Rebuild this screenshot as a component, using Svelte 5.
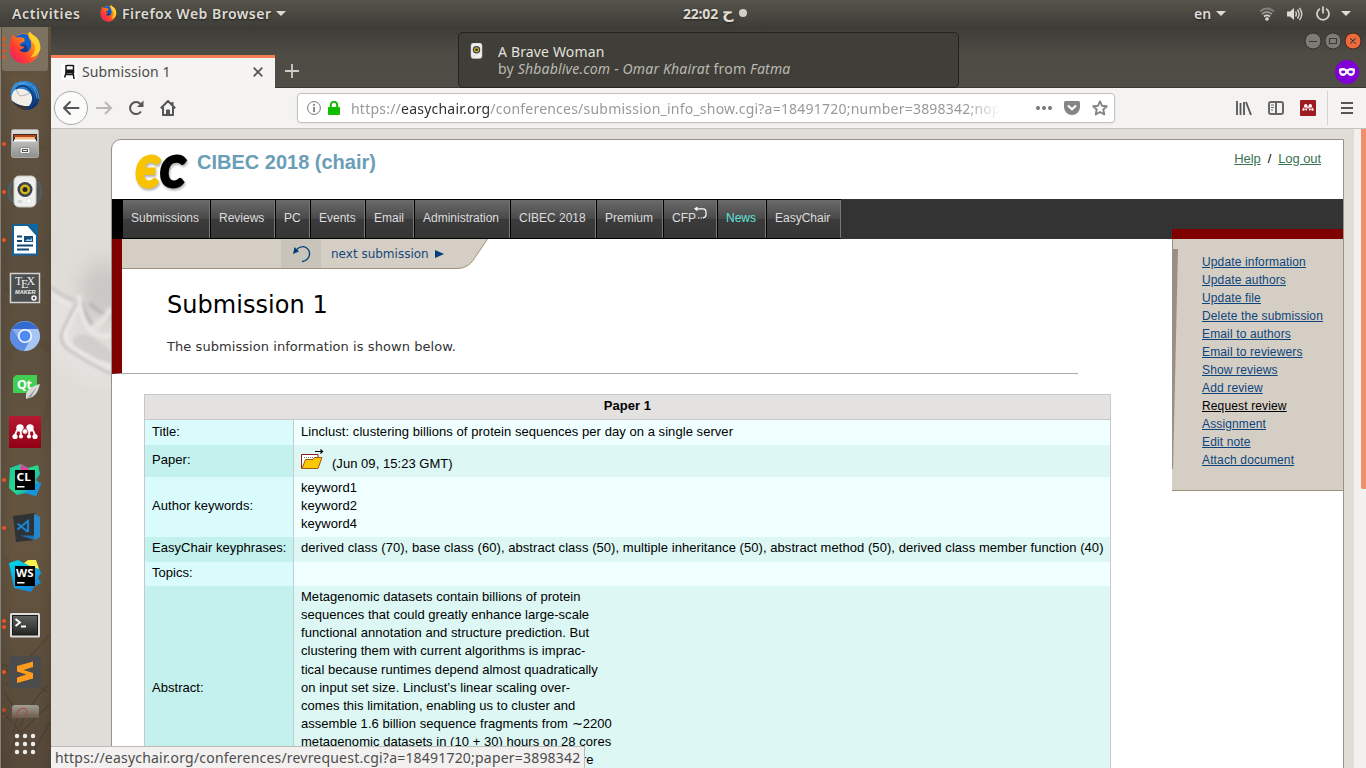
<script>
  const menu = [
    { label: 'Submissions', w: 88 },
    { label: 'Reviews', w: 65 },
    { label: 'PC', w: 35 },
    { label: 'Events', w: 55 },
    { label: 'Email', w: 49 },
    { label: 'Administration', w: 96 },
    { label: 'CIBEC 2018', w: 86 },
    { label: 'Premium', w: 67 },
    { label: 'CFP', w: 54, back: true },
    { label: 'News', w: 49, hot: true },
    { label: 'EasyChair', w: 75 }
  ];
  const actions = [
    'Update information', 'Update authors', 'Update file', 'Delete the submission',
    'Email to authors', 'Email to reviewers', 'Show reviews', 'Add review',
    'Request review', 'Assignment', 'Edit note', 'Attach document'
  ];
  const abstract = [
    'Metagenomic datasets contain billions of protein',
    'sequences that could greatly enhance large-scale',
    'functional annotation and structure prediction. But',
    'clustering them with current algorithms is imprac-',
    'tical because runtimes depend almost quadratically',
    'on input set size. Linclust’s linear scaling over-',
    'comes this limitation, enabling us to cluster and',
    'assemble 1.6 billion sequence fragments from ∼2200',
    'metagenomic datasets in (10 + 30) hours on 28 cores'
  ];
</script>

{#snippet firefox()}
  <circle cx="24" cy="25" r="15" fill="url(#fxo)" />
  <path d="M14 14 Q20 9 27 11 L33 18 Q35 28 27 31 Q20 33 17 27 Z" fill="#0b5fd0" />
  <path d="M20 22 Q28 18 27 29 Q22 33 17 28 Z" fill="#123a91" />
  <path d="M11 15 Q11 12 12 11 Q14 14 17 14 Q20 13 24 15 L24 18 Q21 19 19 21 Q20 23 24 23 Q23 26 19 26 Q21 30 28 28 Q32 24 30 17 Q27 14 28 10 Q29 9 29 8 Q32 11 36 14 Q40 19 39 27 Q36 39 25 40 Q14 40 10 30 Q8 21 11 15Z" fill="url(#fxf)" />
  <path d="M28 8 Q29 16 34 21 Q36 28 30 34 Q38 33 40 25 Q40 18 36 14 Q31 11 28 8Z" fill="#ffd92e" opacity=".85" />
{/snippet}

{#snippet speaker()}
  <path d="M12 14 Q6 24 12 34 M38 14 Q44 24 38 34" stroke="#48617a" stroke-width="3" fill="none" opacity=".7" />
  <rect x="14" y="8" width="22" height="31" rx="5" fill="#eeeeec" stroke="#c5c5c0" />
  <circle cx="25" cy="21.500" r="7.500" fill="#3a4250" />
  <circle cx="25" cy="21.500" r="5" fill="#d4b814" />
  <circle cx="25" cy="21.500" r="2.500" fill="#22252b" />
  <circle cx="29" cy="33" r="2.500" fill="#fff" stroke="#ccc" stroke-width=".5" />
  <path d="M18 32h4v3h-4z" fill="#d6d6d2" />
{/snippet}

{#snippet people()}
  <path d="M15 28.500Q15.500 23 19.500 20M20.800 28.500V22M20 20L25 24L30 20M29.200 28.500V22M35 28.500Q34.500 23 30.500 20" stroke="#fff" stroke-width="1.900" fill="none" />
  <circle cx="20" cy="20" r="3.700" fill="#fff" /><circle cx="30" cy="20" r="3.700" fill="#fff" />
  <circle cx="25" cy="23.500" r="2.700" fill="#fff" stroke="#a80d2a" stroke-width=".7" />
  <circle cx="15" cy="28.500" r="2.600" fill="#fff" /><circle cx="21" cy="28.500" r="2.100" fill="#fff" />
  <circle cx="29" cy="28.500" r="2.100" fill="#fff" /><circle cx="35" cy="28.500" r="2.600" fill="#fff" />
{/snippet}

<div class="desktop">
  <header class="topbar">
    <span class="activities">Activities</span>
    <svg class="fx-small" viewBox="8 8 33 33">{@render firefox()}</svg>
    <span class="app-name">Firefox Web Browser</span>
    <i class="caret"></i>
    <div class="clock"><span>22:02</span><span class="ar">ح</span><i></i></div>
    <div class="status">
      <span class="lang">en</span><i class="caret"></i>
      <svg class="wifi" width="16" height="16" viewBox="0 0 16 16" fill="none" stroke="#d5d4cf" stroke-width="1.700">
        <path d="M1 5.500 Q8 -.5 15 5.500" opacity=".4" /><path d="M3 8 Q8 4 13 8" opacity=".55" /><path d="M5 10.500 Q8 8.300 11 10.500" />
        <circle cx="8" cy="13" r="1.800" fill="#dfdbd2" stroke="none" />
      </svg>
      <svg class="vol" width="17" height="16" viewBox="0 0 17 16">
        <path d="M1 5.500h3L8 2v12L4 10.500H1z" fill="#dfdbd2" />
        <path d="M9.500 5.500q1.800 2.500 0 5M11.500 3.500q3.200 4.500 0 9M13.500 1.800q4.500 6.200 0 12.400" fill="none" stroke="#d5d1c9" stroke-width="1.400" />
      </svg>
      <svg class="power" width="16" height="16" viewBox="0 0 16 16" fill="none" stroke="#d5d1c9" stroke-width="1.800">
        <path d="M5 2.700A6 6 0 1 0 11 2.700M8 .5v7" />
      </svg>
      <i class="caret last"></i>
    </div>
  </header>

  <div class="body">
    <aside class="dock">
      <svg class="texture" viewBox="0 0 51 741" fill="none" stroke="#332b22">
        <path d="M1 650Q20 660 49 620M5 671Q28 661 47 679M10 741Q20 700 48 671M1 700Q15 711 30 733M20 720L50 690M4 680L18 700L12 722M32 741L50 710M5 655L20 672" stroke-width="1.500" opacity=".3" />
        <path d="M4 40Q30 60 48 30M10 120Q30 100 44 125M3 265Q20 280 42 255M7 340Q20 300 49 330M3 540L14 550M30 400Q44 420 49 380" stroke-width="5" opacity=".07" />
      </svg>
      <svg class="slot" viewBox="0 0 50 48">
        <defs>
          <linearGradient id="fxf" x1="0" y1="1" x2="1" y2="0"><stop offset="0" stop-color="#e6107b" /><stop offset=".35" stop-color="#ff3d32" /><stop offset=".65" stop-color="#ff8a12" /><stop offset="1" stop-color="#ffe04a" /></linearGradient>
          <linearGradient id="fxo" x1="0" y1="1" x2="1" y2="0"><stop offset="0" stop-color="#ff2d50" /><stop offset="1" stop-color="#ffb80e" /></linearGradient>
          <linearGradient id="steel" x1="0" y1="0" x2="0" y2="1"><stop offset="0" stop-color="#dededc" /><stop offset="1" stop-color="#8f8f8d" /></linearGradient>
          <linearGradient id="jb" x1="0" y1="0" x2="1" y2="1"><stop offset="0" stop-color="#21c8a0" /><stop offset=".5" stop-color="#24d98c" /><stop offset="1" stop-color="#087cfa" /></linearGradient>
          <linearGradient id="ws" x1="0" y1="0" x2=".6" y2="1"><stop offset="0" stop-color="#00d9e8" /><stop offset="1" stop-color="#1888dc" /></linearGradient>
          <linearGradient id="glass" x1="0" y1="0" x2="0" y2="1"><stop offset="0" stop-color="#606260" /><stop offset="1" stop-color="#242624" /></linearGradient>
          <linearGradient id="mend" x1="0" y1="0" x2="0" y2="1"><stop offset="0" stop-color="#b41a32" /><stop offset="1" stop-color="#920015" /></linearGradient>
          <linearGradient id="bird" x1="0" y1="0" x2=".7" y2="1"><stop offset="0" stop-color="#4aa3e6" /><stop offset=".5" stop-color="#1f6fc0" /><stop offset="1" stop-color="#0c2c68" /></linearGradient>
        </defs>
        <rect x="2" y="0" width="46" height="47" rx="3" fill="#857969" opacity=".8" />
        <g fill="#e95420" opacity=".8"><circle cx="4" cy="15" r="2" /><circle cx="4" cy="21" r="2" /><circle cx="4" cy="27" r="2" /><circle cx="4" cy="33" r="2" /></g>
        <g transform="translate(.5 -.5)">{@render firefox()}</g>
      </svg>
      <svg class="slot" viewBox="0 0 50 48">
        <path d="M10.500 24Q10 12 20 9.500Q31 7.500 37 15Q42 25 37 33Q32 38.500 25 38Q13 35 10.500 24Z" fill="url(#bird)" />
        <path d="M11.500 24Q13 18 17 17Q26 16 31 22Q34 28 29 34Q19 35 11.500 28Z" fill="#f1eee8" />
        <path d="M16 18L20 24Q26 23.500 30 21" stroke="#b9b4a9" stroke-width="1" fill="none" />
        <path d="M12 29Q19 35 29 34L25 38Q16 36 12 29Z" fill="#3a3530" />
        <path d="M16 17Q20 12 27 15Q35 20 33 33" fill="none" stroke="#123d80" stroke-width="1.500" />
        <path d="M19 12Q25 10 30 13M30 12Q36 17 37 26M34 14Q39 20 39 27" stroke="#65b3ee" stroke-width="1" fill="none" opacity=".7" />
      </svg>
      <svg class="slot" viewBox="0 0 50 48">
        <circle cx="4" cy="24" r="2" fill="#e95420" />
        <rect x="11.500" y="9.500" width="27" height="28" rx="2" fill="url(#steel)" stroke="#a9a9a5" />
        <path d="M12 13V10.500h26V13z" fill="#d9d9d7" />
        <path d="M13 14h24v7H13z" fill="#3b2e25" /><path d="M14 15h22v2H14z" fill="#b94216" /><path d="M15 17h20v3H15z" fill="#f5bd8a" /><path d="M14 19.500h22v2H14z" fill="#fff" />
        <rect x="20" y="27.500" width="10" height="6" rx="1.500" fill="#f4f4f3" stroke="#888" /><path d="M22 29h6v3h-6z" fill="#555" /><path d="M23 30h4v1h-4z" fill="#eee" />
      </svg>
      <svg class="slot" viewBox="0 0 50 48"><circle cx="4" cy="24" r="2" fill="#e95420" />{@render speaker()}</svg>
      <svg class="slot" viewBox="0 0 50 48">
        <circle cx="4" cy="24" r="2" fill="#e95420" />
        <path d="M14 9H28L37 19V38.500H13V10Z" fill="#fff" stroke="#12619c" stroke-width="2" /><path d="M29 8h9v10z" fill="#0a6aa8" />
        <path d="M17 20.500h5M17 25h5M17 29.500h16M17 33.500h12" stroke="#0e4870" stroke-width="2" /><path d="M24 20h9v6h-9z" fill="#15507c" /><path d="M25 25l3-2 2 1 2-2v3z" fill="#a6cfea" />
      </svg>
      <svg class="slot" viewBox="0 0 50 48">
        <path d="M10.500 9.500h29v29h-29z" fill="#4c4f4f" stroke="#d2d2d0" stroke-width="1.500" />
        <text x="15" y="21" fill="#eee" font-family="Liberation Serif, serif" font-size="12">T<tspan x="21" dy="3">E</tspan><tspan x="26.500" dy="-3">X</tspan></text>
        <text x="15" y="30" fill="#eee" font-family="Liberation Sans, sans-serif" font-weight="bold" font-style="italic" font-size="5.600">MAKER</text>
        <circle cx="34" cy="34" r="2" fill="none" stroke="#fff" stroke-width="1.500" />
      </svg>
      <svg class="slot" viewBox="0 0 50 48">
        <circle cx="25" cy="24" r="15" fill="#8aaeea" /><path d="M12 17A15 15 0 0 1 38 17H25Z" fill="#356bd0" /><path d="M12 16.500A15 15 0 0 0 24 39L30 28L18 26Z" fill="#5c8ce6" /><path d="M38 17A15 15 0 0 1 24 39L31 27L28 17Z" fill="#a9c5f3" />
        <circle cx="25" cy="24" r="7" fill="#fff" /><circle cx="25" cy="24" r="5.500" fill="#4f8af5" />
      </svg>
      <svg class="slot" viewBox="0 0 50 48">
        <path d="M16 15H37V33H13V18Z" fill="#41cd52" />
        <text x="17" y="28.500" fill="#fff" font-family="Noto Sans, sans-serif" font-weight="bold" font-size="12.500" textLength="15">Qt</text>
        <path d="M26 37Q25 28 40 24Q37 37 29 38L26 39Z" fill="#d8d9d8" /><path d="M27 38L37 27L31 37Z" fill="#9c9f9d" />
      </svg>
      <svg class="slot" viewBox="0 0 50 48"><path d="M9 8h32v32H9z" fill="url(#mend)" />{@render people()}</svg>
      <svg class="slot" viewBox="0 0 50 48">
        <circle cx="4" cy="24" r="2" fill="#e95420" />
        <path d="M10 12L21 8L28 12L38 9L40 18L36 24L41 28L36 40L26 37L17 39L9 32Z" fill="url(#jb)" /><path d="M21 8L30 14L20 18Z" fill="#e83e9b" /><path d="M33 28L41 27L36 40L25 37Z" fill="#1595df" />
        <path d="M15 14h20v20H15z" fill="#000" /><text x="16.500" y="25" fill="#fff" font-family="Noto Sans, sans-serif" font-weight="bold" font-size="11" textLength="14.500" lengthAdjust="spacingAndGlyphs">CL</text><path d="M17 30h7.500v1.500H17z" fill="#fff" />
      </svg>
      <svg class="slot" viewBox="0 0 50 48">
        <circle cx="4" cy="24" r="2" fill="#e95420" />
        <path d="M13 12L35 9L35 36L16 38Z" fill="#303236" /><path d="M34 10L40 13V33L34 36Z" fill="#2288d0" /><path d="M20 31.500H34V36Z" fill="#1c6faf" />
        <path d="M17.500 19.500L28 28M17.500 25.500L28 17V28" stroke="#1784d0" stroke-width="2.200" fill="none" />
      </svg>
      <svg class="slot" viewBox="0 0 50 48">
        <path d="M9 11L18 8L24 11L35 8L41 21L38 26L41 31L34 35L31 40L14 36Z" fill="url(#ws)" /><path d="M24 11L28 8H36L39 17L30 14Z" fill="#fcf04d" />
        <path d="M15 14h20v20H15z" fill="#000" /><text x="16" y="25" fill="#fff" font-family="Noto Sans, sans-serif" font-weight="bold" font-size="11" textLength="17.500" lengthAdjust="spacingAndGlyphs">WS</text><path d="M17 30h7.500v1.500H17z" fill="#fff" />
      </svg>
      <svg class="slot" viewBox="0 0 50 48">
        <circle cx="4" cy="21" r="2" fill="#e95420" /><circle cx="4" cy="27" r="2" fill="#e95420" />
        <rect x="10" y="13" width="30" height="24.500" rx="1.500" fill="#ddd" /><rect x="12.500" y="15.500" width="25" height="19.500" fill="url(#glass)" stroke="#181a18" />
        <path d="M15.500 19L20 22.500L15.500 26M21 26.500h5" stroke="#fff" stroke-width="1.800" fill="none" />
      </svg>
      <svg class="slot" viewBox="0 0 50 48">
        <circle cx="4" cy="24" r="2" fill="#e95420" /><rect x="9" y="8" width="32" height="32" rx="2" fill="#4b4b4b" />
        <path d="M17 18L33 13.500V19L23.500 22L33 25V30.500L17 35V29.500L26.500 26.500L17 23.500Z" fill="#ff9c1c" />
      </svg>
      <svg class="slot" viewBox="0 0 50 48">
        <g fill="#bc4a25"><circle cx="4" cy="14" r="2" /><circle cx="4" cy="20" r="1.500" opacity=".4" /></g>
        <path d="M12 22V12Q12 9 15 9H36Q39 9 39 12V22Z" fill="url(#trash)" /><linearGradient id="trash" x1="0" y1="0" x2="0" y2="1"><stop offset="0" stop-color="#a39e96" /><stop offset="1" stop-color="#6a5b4c" /></linearGradient>
        <path d="M18 21Q15 13 24 12Q30 15 24 20" fill="none" stroke="#a3493a" />
      </svg>
      <svg class="apps" viewBox="0 0 50 30" fill="#efeeec">
        {#each [6, 14, 22] as cy}{#each [17, 25, 33] as cx}<circle {cx} {cy} r="2.200" />{/each}{/each}
      </svg>
    </aside>

    <main class="window">
      <div class="titlebar">
        <div class="tab">
          <svg width="16" height="16" viewBox="0 0 16 16"><rect width="16" height="16" rx="2" fill="#fff" /><path d="M5.500 1.500h6.500M5 1v8M12.500 1v8M5.500 8L3.500 13.500M12 8l1 7M4.500 10.500h8" stroke="#171717" stroke-width="1.500" fill="none" /><path d="M5 5.500h8v4H4.500z" fill="#171717" /></svg>
          <span>Submission 1</span>
          <svg class="x" width="10" height="10" viewBox="0 0 10 10"><path d="M.7.7l8.600 8.600M9.300.7L.7 9.300" stroke="#555" stroke-width="1.700" /></svg>
        </div>
        <svg class="plus" width="14" height="14" viewBox="0 0 14 14"><path d="M7 0v14M0 7h14" stroke="#cfcdc8" stroke-width="1.800" /></svg>
        <div class="controls">
          <svg width="58" height="18" viewBox="0 0 58 18" fill="none">
            <circle cx="9" cy="9" r="8" fill="#7d7b74" stroke="#33322d" /><circle cx="29" cy="9" r="8" fill="#7d7b74" stroke="#33322d" /><circle cx="49" cy="9" r="8" fill="#ed6a3c" stroke="#43261a" />
            <path d="M5 9.500h8M25.500 6.500h7v5h-7zM46.300 6.300l5.400 5.400M51.700 6.300l-5.400 5.400" stroke="#3b3933" stroke-width="1.100" />
          </svg>
          <svg class="mask" width="24" height="24" viewBox="0 0 24 24"><circle cx="12" cy="12" r="12" fill="#8000d7" /><path d="M4 9Q8 7 12 9.500Q16 7 20 9Q20.500 16 16 16Q14 16 12 13.500Q10 16 8 16Q3.500 16 4 9Z" fill="#fff" /><ellipse cx="8.200" cy="12" rx="2.200" ry="1.400" fill="#8000d7" /><ellipse cx="15.800" cy="12" rx="2.200" ry="1.400" fill="#8000d7" /></svg>
        </div>
      </div>

      <div class="toolbar">
        <div class="back"><svg width="18" height="16" viewBox="0 0 18 16" fill="none" stroke="#555" stroke-width="2" stroke-linecap="round" stroke-linejoin="round"><path d="M16.500 8H2M8 2L2 8l6 6" /></svg></div>
        <svg class="fwd" width="17" height="14" viewBox="0 0 17 14" fill="none" stroke="#b9b8b6" stroke-width="2"><path d="M0 7h15M9 1l6 6-6 6" /></svg>
        <svg class="reload" width="16" height="16" viewBox="0 0 16 16" fill="none" stroke="#555" stroke-width="2"><path d="M13 11.500A6 6 0 1 1 12.500 4" /><path d="M15.500 .5v6.500H9z" fill="#555" stroke="none" /></svg>
        <svg class="home" width="16" height="16" viewBox="0 0 16 16" fill="none" stroke="#555" stroke-width="2" stroke-linejoin="round"><path d="M.8 8.300L8 1l7.200 7.300M3 7v8h10V7M12.500 2v3" /><path d="M6.500 15v-5h3v5" fill="#555" stroke-width="1" /></svg>
        <div class="urlbar">
          <svg width="14" height="14" viewBox="0 0 14 14"><circle cx="7" cy="7" r="6.400" fill="none" stroke="#777" /><path d="M6.200 3h1.700v1.700H6.200zM6.200 6h1.700v5H6.200z" fill="#777" /></svg>
          <svg class="lock" width="12" height="14" viewBox="0 0 12 14"><path d="M2.800 7V4a3.200 3.200 0 0 1 6.400 0v3" fill="none" stroke="#12bc00" stroke-width="2" /><rect y="6" width="12" height="8" rx="1" fill="#12bc00" /></svg>
          <div class="url">https://<b>easychair.org</b>/conferences/submission_info_show.cgi?a=18491720;number=3898342;nop</div>
          <svg class="dots" width="16" height="4" viewBox="0 0 16 4" fill="#777"><circle cx="2" cy="2" r="2" /><circle cx="8" cy="2" r="2" /><circle cx="14" cy="2" r="2" /></svg>
          <svg class="pocket" width="16" height="14" viewBox="0 0 16 14"><path d="M1.500 0h13Q16 0 16 1.500V6A8 8 0 0 1 0 6V1.500Q0 0 1.500 0Z" fill="#858585" /><path d="M4.500 5L8 8.300 11.500 5" stroke="#fff" stroke-width="2" fill="none" stroke-linecap="round" /></svg>
          <svg class="star" width="16" height="16" viewBox="0 0 16 16"><path d="M8 1.300l2 4.400 4.800.5-3.500 3.300 1 4.900L8 12l-4.300 2.400 1-4.900L1.200 6.200 6 5.700z" fill="none" stroke="#858585" stroke-width="1.900" stroke-linejoin="round" /></svg>
        </div>
        <svg class="lib" width="16" height="14" viewBox="0 0 16 14" stroke="#555" stroke-width="1.800"><path d="M1 0v14M4.500 2v12M8 1v13M10 1l5 13" /></svg>
        <svg class="side-ic" width="16" height="14" viewBox="0 0 16 14" fill="none" stroke="#666"><rect x="1" y="1" width="14" height="12" rx="2" stroke-width="2" /><path d="M8 1v12" stroke-width="2" /><path d="M3 4h3M3 6.500h3M3 9h2" /></svg>
        <svg class="mend" width="16" height="16" viewBox="9 8 32 32"><rect x="9" y="8" width="32" height="32" rx="2" fill="#9e1b20" /><g transform="translate(2.500 1.500) scale(.9)">{@render people()}</g></svg>
        <i class="sep"></i>
        <svg class="burger" width="12" height="12" viewBox="0 0 12 12" stroke="#555" stroke-width="1.900"><path d="M0 1h12M0 6h12M0 11h12" /></svg>
      </div>

      <div class="viewport">
        <svg class="swirl" width="61" height="160" viewBox="0 0 61 160" fill="none">
          <defs><filter id="soft" x="-20%" y="-20%" width="140%" height="140%"><feGaussianBlur stdDeviation="1.500" /></filter><filter id="haze" x="-80%" y="-80%" width="260%" height="260%"><feGaussianBlur stdDeviation="11" /></filter></defs>
          <ellipse cx="52" cy="62" rx="22" ry="30" fill="#a5a5a2" opacity=".4" filter="url(#haze)" />
          <path d="M0 70H24L10 106L61 145V160L0 120Z" fill="#f2f1ef" opacity=".5" filter="url(#haze)" />
          <g filter="url(#soft)">
            <path d="M0 58Q12 68 24 71" stroke="#c9c8c5" stroke-width="3" />
            <path d="M0 65Q10 72 20 77" stroke="#eceae8" stroke-width="3" />
            <path d="M22 110Q34 96 61 124V134Q36 130 22 116Z" fill="#d0cfcc" />
            <path d="M27 72Q18 87 11 103Q8 114 18 121Q38 135 61 145" stroke="#c4c3c0" stroke-width="2.500" />
            <path d="M30 72Q22 87 15 102Q12 111 21 117Q40 129 61 140" stroke="#eeedeb" stroke-width="2.500" />
            <path d="M30 72Q36 90 42 96M38 74Q48 84 61 88" stroke="#b3b2af" stroke-width="4" opacity=".75" />
            <path d="M40 101Q52 92 61 80" stroke="#e5e4e1" stroke-width="7" opacity=".9" />
            <path d="M28 66Q29 88 38 100Q48 110 61 106" stroke="#e9e8e6" stroke-width="4.500" />
          </g>
        </svg>
        <div class="page">
          <div class="head">
            <svg class="ec" width="56" height="42" viewBox="0 0 56 42">
              <g class="mark" font-family="Lato, sans-serif" font-weight="900" font-style="italic" stroke-width="3">
                <text x="1.500" y="35.500" font-size="42" fill="#f8c300" stroke="#f8c300" textLength="23.500" lengthAdjust="spacingAndGlyphs">Є</text>
                <text x="26" y="35.500" font-size="42" fill="#000" stroke="#000" textLength="24.500" lengthAdjust="spacingAndGlyphs">C</text>
              </g>
            </svg>
            <h2>CIBEC 2018 (chair)</h2>
            <div class="account"><a href="#help">Help</a><span>/</span><a href="#logout">Log out</a></div>
          </div>
          <nav>
            {#each menu as m}
              <div class="item" class:hot={m.hot} style="width:{m.w}px">{m.label}{#if m.back}<svg width="13" height="13" viewBox="0 0 13 13" fill="none" stroke="#fff" stroke-width="1.200"><path d="M1 1.800h8q3 0 3 3.200v3q0 2.500-3 2.500M3.500 0L1 1.800L3.500 3.600" /><path d="M4 11h6" stroke-dasharray="1.500 1.200" /></svg>{/if}</div>
            {/each}
          </nav>
          <div class="columns">
            <div class="content">
              <section class="intro">
                <div class="subnav">
                  <svg class="shape" width="366" height="30" viewBox="0 0 366 30"><path d="M0 0H365.500L352 20Q346 29.500 335 29.500H0Z" fill="#d5cec4" /><path d="M365.500 0L352 20Q346 29.500 335 29.500H0" fill="none" stroke="#a08f78" /></svg>
                  <div class="undo"><svg width="20" height="18" viewBox="0 0 20 18"><path d="M5 5Q10 0 15 2.500Q20 6 18 11.500Q16 16 11 16.500" fill="none" stroke="#003f7d" stroke-width="1.300" /><path d="M2 9L3.500 2L8 6.500Z" fill="#003f7d" /></svg></div>
                  <span class="next">next submission<i></i></span>
                </div>
                <h1>Submission 1</h1>
                <p>The submission information is shown below.</p>
              </section>
              <table>
                <colgroup><col class="c1" /><col /></colgroup>
                <thead><tr><th colspan="2">Paper 1</th></tr></thead>
                <tbody>
                  <tr class="r25"><td>Title:</td><td class="title">Linclust: clustering billions of protein sequences per day on a single server</td></tr>
                  <tr class="alt r32"><td>Paper:</td><td><div class="file"><svg width="24" height="22" viewBox="0 0 24 22"><path d="M.5 20.500V6.500H17V9" fill="#fff" stroke="#8b1a1a" /><path d="M3 9.500h13" stroke="#777" stroke-dasharray="1 1" /><path d="M1 20.500L4.500 11.500H12L13.500 9.500H21L17 20.500Z" fill="#fbc800" stroke="#a5541a" /><path d="M14 3.500h7M19.500 1.500L21.500 3.500L19.500 5.500" stroke="#000" stroke-width="1.200" fill="none" /></svg><span>(Jun 09, 15:23 GMT)</span></div></td></tr>
                  <tr class="r60"><td>Author keywords:</td><td>keyword1<br />keyword2<br />keyword4</td></tr>
                  <tr class="alt r25"><td>EasyChair keyphrases:</td><td class="phrases">derived class (70), base class (60), abstract class (50), multiple inheritance (50), abstract method (50), derived class member function (40)</td></tr>
                  <tr class="r24"><td>Topics:</td><td></td></tr>
                  <tr class="alt abs"><td>Abstract:</td><td class="text">{#each abstract as line}<div class="line">{line}</div>{/each}<div class="line tail">re</div></td></tr>
                </tbody>
              </table>
            </div>
            <aside class="actions">
              <svg width="8" height="220" viewBox="0 0 8 220"><path d="M1 0H6L1 220Z" fill="#998f87" /></svg>
              {#each actions as a}<a href="#action" class:hover={a === 'Request review'}>{a}</a>{/each}
            </aside>
          </div>
        </div>
        <div class="scroll"><i></i></div>
      </div>
    </main>
  </div>

  <div class="toast">
    <svg width="13" height="16" viewBox="12 8 26 32">{@render speaker()}</svg>
    <div><div class="song">A Brave Woman</div><div class="by">by <em>Shbablive.com - Omar Khairat</em> from <em>Fatma</em></div></div>
  </div>
  <div class="hint">https://easychair.org/conferences/revrequest.cgi?a=18491720;paper=3898342</div>
</div>

<style>
  :global(body) { overflow: hidden; }
  * { box-sizing: border-box; }
  svg { display: block; flex: none; }
  .desktop { position: relative; width: 1366px; height: 768px; overflow: hidden; font-family: "Noto Sans", "Open Sans", sans-serif; display: flex; flex-direction: column; }
  .topbar { position: relative; height: 27px; flex: none; display: flex; align-items: center; background: linear-gradient(#56534b, #3e3d38); color: #dfdbd2; font-weight: 600; font-size: 14px; text-shadow: 0 1px 2px #222; white-space: nowrap; }
  .activities { margin-left: 12px; width: 88px; letter-spacing: .6px; }
  .fx-small { width: 17px; height: 17px; }
  .app-name { margin-left: 5px; width: 149px; letter-spacing: .48px; }
  .caret { margin-left: 5px; border: 5px solid transparent; border-top-color: #dfdbd2; border-bottom: 0; }
  .clock { position: absolute; left: 683px; top: 3px; display: flex; align-items: center; font-size: 14px; height: 20px; }
  .clock span { font-weight: 700; letter-spacing: -.2px; }
  .clock .ar { font-family: "DejaVu Sans", sans-serif; margin-left: 4px; font-size: 16px; line-height: 18px; }
  .clock i { width: 8px; height: 8px; border-radius: 50%; background: #d3d0ca; margin-left: 5px; }
  .status { margin-left: auto; display: flex; align-items: center; padding-right: 15px; }
  .lang { width: 17px; }
  .wifi { margin-left: 33px; } .vol { margin-left: 11px; } .power { margin-left: 12px; } .last { margin-left: 10px; }

  .body { flex: 1; display: flex; min-height: 0; }
  .dock { position: relative; width: 51px; flex: none; background: linear-gradient(90deg, rgba(0,0,0,.08), transparent 25%, transparent 75%, rgba(0,0,0,.08)), linear-gradient(#655540, #5b4e3e 30%, #655540 70%, #56493a); border-left: 1px solid #85827b; overflow: hidden; }
  .texture { position: absolute; inset: 0; }
  .slot { position: relative; width: 50px; height: 48px; margin-left: -1px; }
  .texture + .slot { margin-top: -3px; }
  .apps { position: relative; width: 50px; height: 30px; margin: -14px 0 0 -1px; }

  .window { flex: 1; min-width: 0; display: flex; flex-direction: column; background: #f4f3f1; }
  .titlebar { height: 61px; flex: none; display: flex; background: linear-gradient(#3c3b37, #4e4b44 42%, #504d46); border-bottom: 1px solid #3a3833; }
  .tab { height: 33px; width: 224px; margin: 28px 0 -1px; flex: none; display: flex; align-items: center; padding: 0 12px 2px 10px; background: #f5f4f2; border-top: 3px solid #f37f55; color: #4c4c4c; font-size: 14px; }
  .tab span { margin: -2px 0 0 5px; letter-spacing: .1px; }
  .tab .x { margin-left: auto; }
  .plus { margin: 37px 0 0 10px; }
  .controls { margin-left: auto; width: 62px; padding-top: 5px; }
  .mask { margin: 10px 0 0 31px; }
  .toolbar { height: 41px; flex: none; display: flex; align-items: center; border-bottom: 1px solid #c5c2be; background: #f4f3f1; }
  .back { width: 34px; height: 34px; margin-left: 3px; border: 1px solid #aaa9a7; border-radius: 50%; background: #fbfbfa; display: flex; align-items: center; justify-content: center; }
  .fwd { margin-left: 8px; } .reload { margin-left: 15px; } .home { margin-left: 16px; }
  .urlbar { margin-left: 121px; width: 818px; height: 30px; border: 1px solid #c4c2be; border-radius: 4px; background: #fff; display: flex; align-items: center; padding-left: 9px; box-shadow: 0 1px 3px rgba(0,0,0,.07); }
  .lock { margin-left: 7px; }
  .url { margin-left: 11px; width: 648px; overflow: hidden; white-space: nowrap; color: #999; font-size: 14px; letter-spacing: .22px; mask-image: linear-gradient(90deg, #000 615px, transparent 650px); }
  .url b { font-weight: 400; color: #333; }
  .dots { margin-left: 37px; } .pocket { margin-left: 12px; } .star { margin-left: 12px; }
  .lib { margin-left: 121px; } .side-ic { margin-left: 16px; } .mend { margin-left: 16px; }
  .sep { width: 1px; height: 34px; background: #d5d3d0; margin-left: 11px; } .burger { margin-left: 13px; }

  .viewport { position: relative; flex: 1; min-height: 0; overflow: hidden; background: #e0ddd9; display: flex; font-family: "Liberation Sans", sans-serif; }
  .swirl { position: absolute; left: 0; top: 100px; }
  .page { position: relative; margin: 10px 0 0 60px; width: 1233px; height: 800px; flex: none; background: #fff; border: 1px solid #95928e; border-radius: 10px 0 0 0; }
  .head { height: 59px; display: flex; }
  .ec { margin: 11px 0 0 22px; overflow: visible; }
  .mark { filter: drop-shadow(1px 2px 1px rgba(0,0,0,.3)); }
  h2 { margin: 10px 0 0 7px; font-size: 20px; line-height: 24px; color: #6a9eb7; font-weight: 700; white-space: nowrap; }
  .account { margin: 11px 22px 0 auto; display: flex; gap: 7px; font-size: 13px; line-height: 16px; letter-spacing: -.08px; }
  .account a { color: #3b7352; }
  nav { height: 40px; display: flex; background: #333; border-left: 10px solid #000; }
  .item { height: 40px; border: solid #000; border-width: 1px 0 1px 1px; box-shadow: inset -1px 0 #777; padding-left: 8px; font-size: 12px; line-height: 36px; color: #ddd; background: linear-gradient(#6b6b6b, #484848 50%, #3b3b3b 51%, #353535); display: flex; white-space: nowrap; }
  .item svg { margin: 7px 0 0 -2px; }
  .item.hot { color: #5fe6dc; }
  .columns { display: flex; justify-content: space-between; align-items: flex-start; }
  .content { width: 1000px; flex: none; }
  .intro { width: 966px; height: 135px; border-left: 10px solid #800000; border-bottom: 1px solid #aaa; }
  .subnav { position: relative; height: 30px; display: flex; padding-left: 159px; }
  .shape { position: absolute; left: 0; top: 0; }
  .undo { position: relative; width: 40px; height: 29px; background: #c9c4b9; padding: 6px 0 0 10px; }
  .next { position: relative; margin-left: 10px; font: 12px/30px "DejaVu Sans", sans-serif; color: #14497a; white-space: nowrap; }
  .next i { display: inline-block; border: 4px solid transparent; border-left: 9px solid #003f7d; border-right: 0; margin-left: 6px; }
  h1 { margin: 22px 0 0 45px; font: 400 24px/29px "DejaVu Sans", sans-serif; letter-spacing: .05px; color: #000; }
  p { margin: 18px 0 0 45px; font: 13px/18px "DejaVu Sans", sans-serif; letter-spacing: .06px; color: #333; }
  table { margin: 20px 0 0 32px; width: 967px; border-collapse: separate; border-spacing: 0; border: 1px solid #c8c8c8; font-size: 13px; line-height: 18px; color: #000; table-layout: fixed; letter-spacing: .04px; }
  .c1 { width: 149px; }
  th { height: 25px; padding: 0 0 2px; background: #e4e2e1; border-bottom: 1px solid #c8c8c8; }
  td { padding: 0 0 2px 7px; background: #f0ffff; white-space: nowrap; vertical-align: middle; }
  td:first-child { background: #d9fbfc; border-right: 1px solid #c5cccc; }
  .alt td { background: #dcf7f4; }
  .alt td:first-child { background: #c3f1ed; }
  .r25 { height: 25px; } .r32 { height: 32px; } .r60 { height: 60px; } .r24 { height: 24px; }
  .alt.r32 td:first-child, .alt.r25 td { padding-bottom: 3px; }
  .title, .phrases { letter-spacing: .055px; }
  .file { display: flex; align-items: center; height: 30px; }
  .file svg { margin-top: -2px; }
  .file span { margin: 8px 0 0 7px; }
  .abs { height: 205px; }
  .abs .text { vertical-align: top; padding-top: 2px; }
  .line:nth-child(5) { margin-top: 1px; }
  .tail { padding-left: 281px; }
  .actions { position: relative; width: 171px; height: 262px; margin-top: -10px; flex: none; background: #d5cec4; border-top: 10px solid #800000; border-bottom: 1px solid #a08f78; padding: 14px 0 0 30px; font-size: 12px; line-height: 18px; letter-spacing: .14px; }
  .actions svg { position: absolute; left: 0; top: 10px; }
  .actions::before { content: ''; position: absolute; left: 0; top: 0; width: 1px; height: 230px; background: #a08f78; }
  .actions a { display: block; width: max-content; color: #0d457c; white-space: nowrap; }
  .actions a.hover { color: #000; }
  .scroll { margin-left: auto; width: 12px; height: 639px; background: #f2f1f0; }
  .scroll i { display: block; margin-left: 7px; width: 5px; height: 360px; background: #f08f6a; border-radius: 0 0 0 2px; }
  .toast { position: absolute; left: 458px; top: 32px; width: 501px; height: 56px; border: 1px solid #22211e; border-radius: 5px; background: #3f3e39; display: flex; padding: 10px 0 0 11px; color: #e3e1dc; font-size: 14px; line-height: 17px; letter-spacing: .15px; white-space: nowrap; }
  .toast svg { margin-right: 15px; }
  .by { color: #bbb9b1; letter-spacing: .19px; }
  .hint { position: absolute; left: 51px; top: 746px; width: 534px; height: 22px; border: solid #bdbbb7; border-width: 1px 1px 0 0; background: #f2f1f0; color: #4c4c4c; font-size: 14px; line-height: 21px; letter-spacing: .2px; padding-left: 4px; white-space: nowrap; }
</style>
